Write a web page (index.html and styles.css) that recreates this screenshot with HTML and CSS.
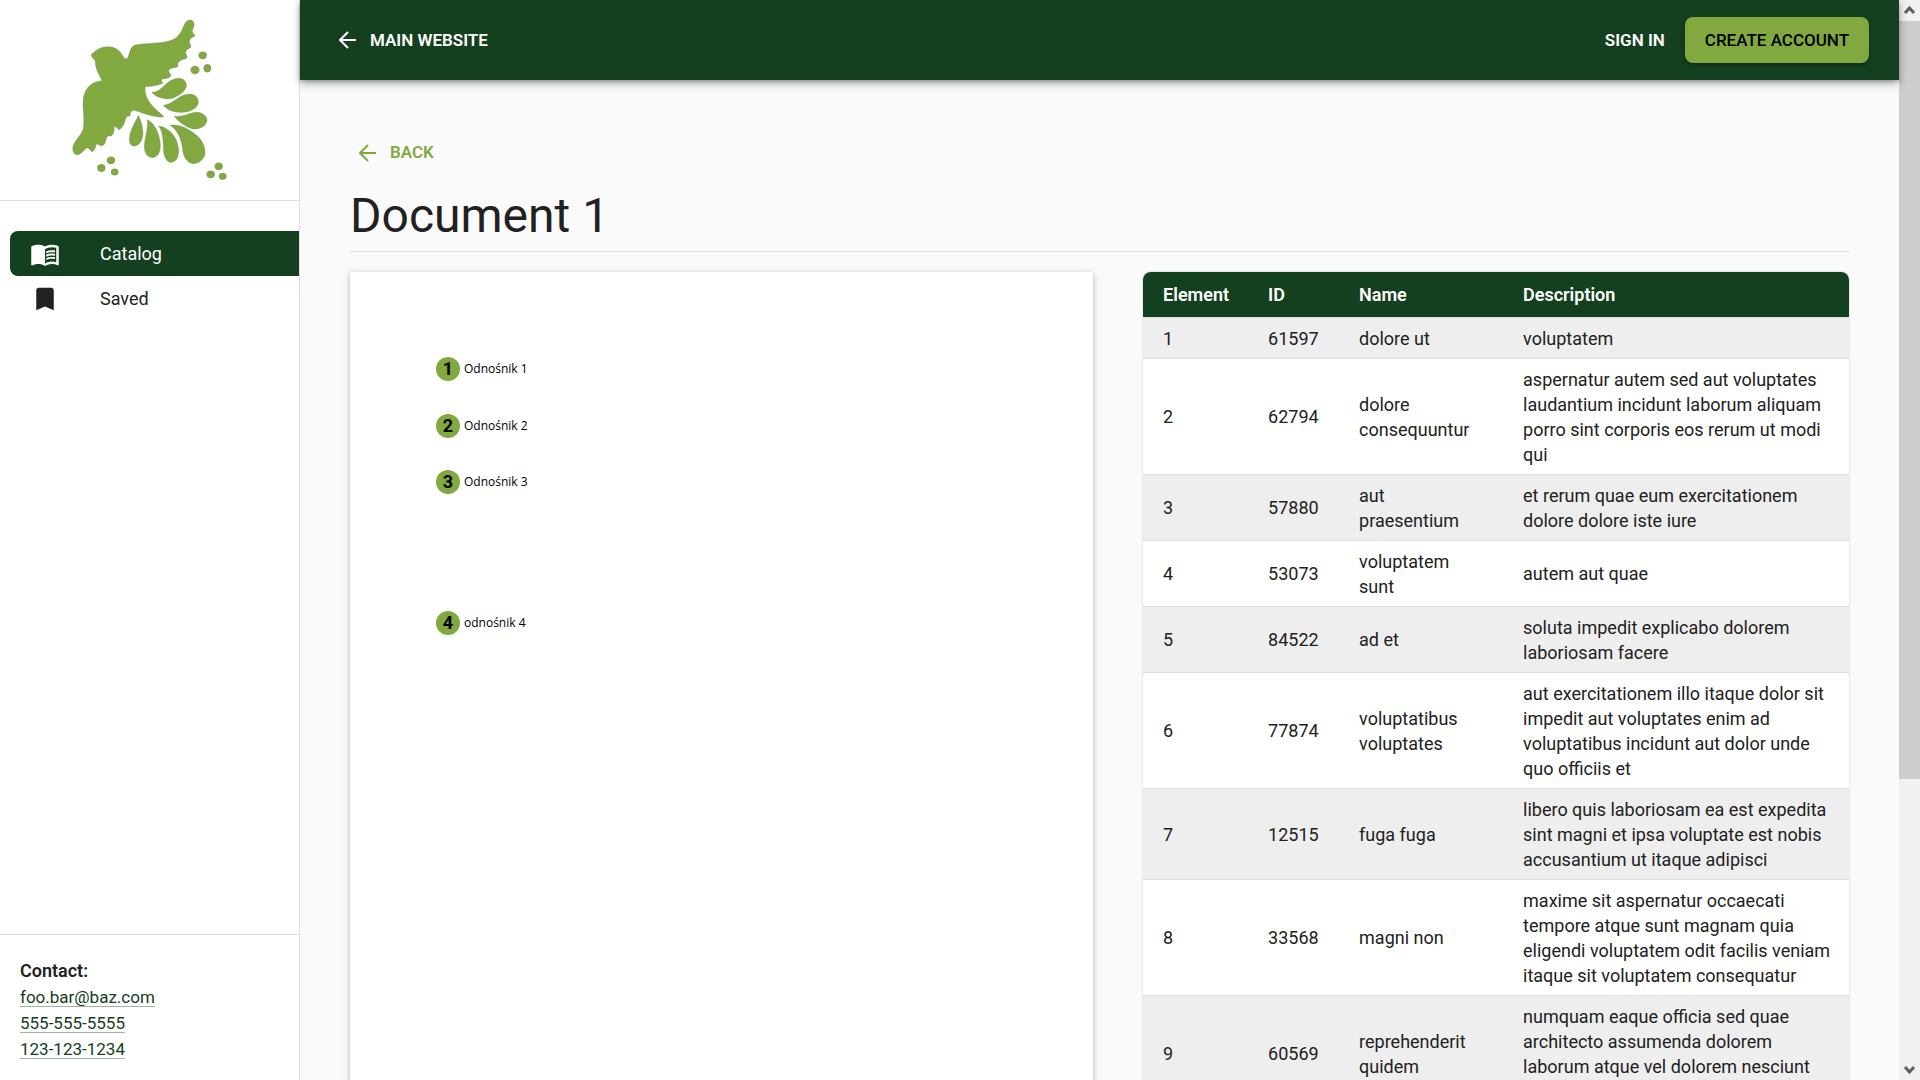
FILE: index.html
```html
<!DOCTYPE html>
<html lang="en">
<head>
<meta charset="utf-8">
<meta name="viewport" content="width=device-width, initial-scale=1">
<title>Document 1</title>
<link rel="stylesheet" href="styles.css">
</head>
<body>
<div class="shell">
  <aside class="sidebar">
    <div class="brand">
      <svg class="logo" viewBox="0 0 540 540" role="img" aria-label="Bird logo">
        <path d="M93 134C108 122 118 110 142 110C164 109 178 119 189 138C196 151 202 149 206 136C210 121 215 107 226 105C263 98 304 102 336 90C356 82 365 64 371 48C377 32 386 28 395 31C406 36 403 50 398 58C395 66 401 73 406 77C399 82 391 83 389 91C387 99 392 104 393 110C389 116 380 117 379 122C374 129 380 135 382 142C378 149 368 147 360 153C352 156 354 163 353 171C344 174 332 173 326 181C325 187 332 192 333 197C327 207 316 204 306 208C302 213 307 217 309 220C293 227 276 230 256 230C253 245 258 260 268 276C280 294 299 307 311 319C307 324 293 321 282 319C260 315 242 306 222 301C213 302 211 309 210 319C203 316 198 322 196 329C193 342 188 351 178 360C172 355 166 350 163 348C162 361 163 370 155 377C148 379 142 376 140 382C137 394 136 406 124 408C117 406 111 400 109 403C106 410 107 420 96 426C90 420 86 413 80 414C70 421 64 434 51 435C38 432 36 417 40 406C47 388 66 374 70 355C75 325 66 291 70 265C75 232 96 214 126 212C116 192 105 174 106 154C104 146 96 146 93 134Z"/>
        <path d="M276 247C307 247 318 208 353 205C371 202 382 217 379 232C368 254 341 267 322 267C304 266 283 259 276 247Z"/>
        <path d="M310 286C343 282 356 251 391 252C407 253 417 266 415 279C408 304 376 308 355 307C337 306 320 298 310 286Z"/>
        <path d="M342 319C373 323 391 304 415 307C434 311 442 323 441 333C436 353 415 358 400 357C378 353 357 336 342 319Z"/>
        <path d="M330 346C356 340 389 357 410 376C427 391 437 412 435 432C431 451 413 462 399 461C380 458 370 440 368 421C365 386 351 359 330 346Z"/>
        <path d="M296 348C324 350 352 381 355 412C358 434 354 452 336 457C322 459 312 441 311 425C308 395 311 368 296 348Z"/>
        <path d="M262 329C280 337 296 364 300 393C304 418 298 441 278 443C262 443 253 428 253 412C253 382 265 359 262 329Z"/>
        <path d="M235 316C226 337 209 361 208 389C208 402 214 408 225 408C239 406 249 388 249 368C248 347 242 330 235 316Z"/>
        <ellipse cx="428" cy="136" rx="12" ry="11"/><ellipse cx="405" cy="180" rx="13" ry="12"/><ellipse cx="442" cy="175" rx="11" ry="12"/>
        <ellipse cx="153" cy="451" rx="12" ry="11"/><ellipse cx="124" cy="474" rx="12" ry="11"/><ellipse cx="164" cy="486" rx="11" ry="10"/>
        <ellipse cx="476" cy="469" rx="12" ry="11"/><ellipse cx="452" cy="493" rx="12" ry="11"/><ellipse cx="488" cy="499" rx="11" ry="10"/>
      </svg>
    </div>
    <nav class="nav" aria-label="Main">
      <a class="nav-item nav-item-active" href="#catalog">
        <svg class="nav-icon" viewBox="0 0 24 24" aria-hidden="true"><path d="M21 5c-1.11-.35-2.33-.5-3.5-.5-1.95 0-4.05.4-5.5 1.5-1.45-1.1-3.55-1.5-5.5-1.5S2.45 4.9 1 6v14.65c0 .25.25.5.5.5.1 0 .15-.05.25-.05C3.1 20.45 5.05 20 6.5 20c1.95 0 4.05.4 5.5 1.5 1.35-.85 3.8-1.5 5.5-1.5 1.65 0 3.35.3 4.75 1.05.1.05.15.05.25.05.25 0 .5-.25.5-.5V6c-.6-.45-1.25-.75-2-1zm0 13.5c-1.1-.35-2.3-.5-3.5-.5-1.7 0-4.15.65-5.5 1.5V8c1.35-.85 3.8-1.5 5.5-1.5 1.2 0 2.4.15 3.5.5v11.5z"/><path d="M17.5 10.5c.88 0 1.73.09 2.5.26V9.24c-.79-.15-1.64-.24-2.5-.24-1.7 0-3.24.29-4.5.83v1.66c1.13-.64 2.7-.99 4.5-.99zM13 12.49v1.66c1.13-.64 2.7-.99 4.5-.99.88 0 1.73.09 2.5.26V11.9c-.79-.15-1.64-.24-2.5-.24-1.7 0-3.24.3-4.5.83zM17.5 14.33c-1.7 0-3.24.29-4.5.83v1.66c1.13-.64 2.7-.99 4.5-.99.88 0 1.73.09 2.5.26v-1.52c-.79-.16-1.64-.24-2.5-.24z"/></svg>
        <span>Catalog</span>
      </a>
      <a class="nav-item" href="#saved">
        <svg class="nav-icon" viewBox="0 0 24 24" aria-hidden="true"><path d="M17 3H7c-1.1 0-1.99.9-1.99 2L5 21l7-3 7 3V5c0-1.1-.9-2-2-2z"/></svg>
        <span>Saved</span>
      </a>
    </nav>
    <address class="contact">
      <strong class="contact-title">Contact:</strong>
      <a href="mailto:foo.bar@baz.com">foo.bar@baz.com</a>
      <a href="tel:555-555-5555">555-555-5555</a>
      <a href="tel:123-123-1234">123-123-1234</a>
    </address>
  </aside>

  <div class="content">
    <header class="topbar">
      <a class="arrow-link" href="#main-website">
        <svg class="arrow" viewBox="0 0 18 18" aria-hidden="true"><path d="M17 9H1M9 1L1 9l8 8"/></svg>
        MAIN WEBSITE
      </a>
      <div class="actions">
        <button class="btn" type="button">SIGN IN</button>
        <button class="btn btn-primary" type="button">CREATE ACCOUNT</button>
      </div>
    </header>

    <main class="page">
      <a class="arrow-link back" href="#catalog">
        <svg class="arrow" viewBox="0 0 18 18" aria-hidden="true"><path d="M17 9H1M9 1L1 9l8 8"/></svg>
        BACK
      </a>
      <h1 class="title">Document 1</h1>
      <div class="columns">
        <section class="sheet" aria-label="Document preview">
          <div class="pin pin-1"><span class="pin-number">1</span>Odnośnik 1</div>
          <div class="pin pin-2"><span class="pin-number">2</span>Odnośnik 2</div>
          <div class="pin pin-3"><span class="pin-number">3</span>Odnośnik 3</div>
          <div class="pin pin-4"><span class="pin-number">4</span>odnośnik 4</div>
        </section>
        <div class="card">
          <table class="elements">
            <colgroup><col class="col-element"><col class="col-id"><col class="col-name"><col></colgroup>
            <thead>
              <tr><th scope="col">Element</th><th scope="col">ID</th><th scope="col">Name</th><th scope="col">Description</th></tr>
            </thead>
            <tbody>
              <tr><td>1</td><td>61597</td><td>dolore ut</td><td>voluptatem</td></tr>
              <tr><td>2</td><td>62794</td><td>dolore consequuntur</td><td>aspernatur autem sed aut voluptates laudantium incidunt laborum aliquam porro sint corporis eos rerum ut modi qui</td></tr>
              <tr><td>3</td><td>57880</td><td>aut praesentium</td><td>et rerum quae eum exercitationem dolore dolore iste iure</td></tr>
              <tr><td>4</td><td>53073</td><td>voluptatem sunt</td><td>autem aut quae</td></tr>
              <tr><td>5</td><td>84522</td><td>ad et</td><td>soluta impedit explicabo dolorem laboriosam facere</td></tr>
              <tr><td>6</td><td>77874</td><td>voluptatibus voluptates</td><td>aut exercitationem illo itaque dolor sit impedit aut voluptates enim ad voluptatibus incidunt aut dolor unde quo officiis et</td></tr>
              <tr><td>7</td><td>12515</td><td>fuga fuga</td><td>libero quis laboriosam ea est expedita sint magni et ipsa voluptate est nobis accusantium ut itaque adipisci</td></tr>
              <tr><td>8</td><td>33568</td><td>magni non</td><td>maxime sit aspernatur occaecati tempore atque sunt magnam quia eligendi voluptatem odit facilis veniam itaque sit voluptatem consequatur</td></tr>
              <tr><td>9</td><td>60569</td><td>reprehenderit quidem</td><td>numquam eaque officia sed quae architecto assumenda dolorem laborum atque vel dolorem nesciunt<br>&nbsp;</td></tr>
            </tbody>
          </table>
        </div>
      </div>
    </main>
  </div>

  <div class="scrollbar" aria-hidden="true">
    <svg class="scroll-arrow" viewBox="0 0 21 21"><path d="M6 13l4.500-5 4.500 5"/></svg>
    <div class="scroll-track"><div class="scroll-thumb"></div></div>
    <svg class="scroll-arrow" viewBox="0 0 21 21"><path d="M6 8l4.500 5 4.500-5"/></svg>
  </div>
</div>
</body>
</html>
```
FILE: styles.css
```css
:root {
  --dark: #144020;
  --green: #81a940;
  --text: #212121;
  --line: #dedede;
}

* { box-sizing: border-box; }

body {
  margin: 0;
  background: #fafafa;
  color: var(--text);
  font: 18px/25px Roboto, "Noto Sans", sans-serif;
}

a { color: inherit; text-decoration: none; }

.shell {
  display: flex;
  height: 100vh;
  overflow: hidden;
}

/* Sidebar */
.sidebar {
  display: flex;
  flex: none;
  flex-direction: column;
  width: 300px;
  border-right: 1px solid var(--line);
  background: #fff;
}

.brand {
  display: flex;
  justify-content: center;
  padding: 10px 0;
  border-bottom: 1px solid var(--line);
}

.logo {
  width: 180px;
  height: 180px;
  fill: var(--green);
  stroke: #71866a;
  stroke-width: 1;
}

.nav {
  flex: 1;
  padding: 30px 0 0 10px;
}

.nav-item {
  display: flex;
  align-items: center;
  gap: 40px;
  height: 45px;
  padding-left: 20px;
}

.nav-item-active {
  border-radius: 8px 0 0 8px;
  background: var(--dark);
  color: #fff;
}

.nav-icon {
  width: 30px;
  height: 30px;
  fill: currentColor;
}

.contact {
  display: flex;
  flex-direction: column;
  align-items: flex-start;
  padding: 23px 20px 18px;
  border-top: 1px solid var(--line);
  font-size: 17px;
  font-style: normal;
  line-height: 26px;
}

.contact-title {
  font-size: 18px;
  font-weight: 600;
}

.contact a {
  color: var(--dark);
  text-decoration: underline 1px #a1b3a6;
  text-decoration-skip-ink: none;
  text-underline-offset: 3px;
}

/* Top bar */
.content {
  flex: 1;
  min-width: 0;
}

.topbar {
  position: relative;
  display: flex;
  align-items: center;
  justify-content: space-between;
  height: 80px;
  padding: 0 30px 0 39px;
  background: var(--dark);
  box-shadow: 0 2px 5px rgba(0, 0, 0, .3), 0 4px 10px rgba(0, 0, 0, .2);
  color: #fff;
}

.arrow-link {
  display: inline-flex;
  align-items: center;
  gap: 13px;
  font-size: 17px;
  font-weight: 600;
}

.arrow {
  width: 18px;
  height: 18px;
  fill: none;
  stroke: currentColor;
  stroke-width: 2;
}

.actions {
  display: flex;
  align-items: center;
}

.btn {
  height: 46px;
  padding: 0 20px;
  border: 0;
  border-radius: 8px;
  background: none;
  color: inherit;
  font: 600 17px/24px Roboto, "Noto Sans", sans-serif;
}

.btn-primary {
  background: var(--green);
  box-shadow: 0 2px 4px rgba(0, 0, 0, .35);
  color: #000;
  font-weight: 500;
}

/* Page */
.page { padding: 60px 50px; }

.back {
  padding-left: 9px;
  color: var(--green);
}

.title {
  margin: 16px 0 20px;
  padding-bottom: 3px;
  border-bottom: 1px solid var(--line);
  font-size: 48px;
  font-weight: 400;
  line-height: 64px;
}

.columns {
  display: grid;
  grid-template-columns: minmax(0, 20fr) minmax(0, 19fr);
  gap: 50px;
  align-items: start;
}

.sheet {
  position: relative;
  aspect-ratio: 210 / 297;
  background: #fff;
  box-shadow: 0 2px 4px rgba(0, 0, 0, .2), 0 1px 10px rgba(0, 0, 0, .12);
}

.pin {
  position: absolute;
  left: 86px;
  display: flex;
  align-items: center;
  gap: 4px;
  color: #000;
  font: 12px/24px "Open Sans", "Noto Sans", sans-serif;
}

.pin-1 { top: 85px; }
.pin-2 { top: 142px; }
.pin-3 { top: 198px; }
.pin-4 { top: 339px; }

.pin-number {
  width: 24px;
  border-radius: 50%;
  background: var(--green);
  font: 700 18px/24px Roboto, "Noto Sans", sans-serif;
  text-align: center;
}

/* Table */
.card {
  overflow: hidden;
  border-radius: 8px;
  background: #fff;
  box-shadow: 0 0 2px rgba(0, 0, 0, .25);
}

.elements {
  width: 100%;
  border-spacing: 0;
  table-layout: fixed;
}

.col-element { width: 105px; }
.col-id { width: 91px; }
.col-name { width: 164px; }

.elements th {
  padding: 10px 20px;
  background: var(--dark);
  color: #fff;
  font-weight: 600;
  text-align: left;
}

.elements td {
  padding: 8px 20px 7px;
  border-top: 1px solid var(--line);
}

.elements th + th,
.elements td + td { padding-right: 16px; }

.elements tbody tr:nth-child(odd) { background: #eee; }

/* Scroll column */
.scrollbar {
  display: flex;
  flex: none;
  flex-direction: column;
  width: 21px;
  background: #f1f1f1;
}

.scroll-arrow {
  width: 21px;
  height: 21px;
  fill: none;
  stroke: #606060;
  stroke-width: 3;
}

.scroll-track { flex: 1; }

.scroll-thumb {
  height: 73%;
  background: #cdcdcd;
}
```
